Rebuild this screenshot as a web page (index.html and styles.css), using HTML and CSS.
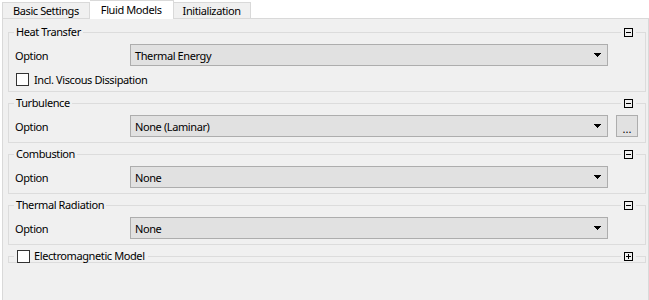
FILE: index.html
```html
<!DOCTYPE html>
<html lang="en">
<head>
    <meta charset="UTF-8">
    <meta name="viewport" content="width=device-width, initial-scale=1.0">
    <title>Fluid Models</title>
    <link rel="stylesheet" href="styles.css">
</head>
<body>
<div class="app">
    <nav class="tab-bar">
        <div class="tab">Basic Settings</div>
        <div class="tab active">Fluid Models</div>
        <div class="tab">Initialization</div>
        <div class="tab-fill"></div>
    </nav>

    <main class="panel">
        <!-- Heat Transfer -->
        <section class="group">
            <div class="group-head">
                <span class="rule start"></span>
                <span class="group-title">Heat Transfer</span>
                <span class="rule"></span>
                <svg class="toggle" width="9" height="9" viewBox="0 0 9 9"><rect x="0.5" y="0.5" width="8" height="8"/><path d="M2 4.5h5"/></svg>
                <span class="rule end"></span>
            </div>
            <div class="group-body">
                <div class="field-row">
                    <span class="field-label">Option</span>
                    <div class="combo">
                        <span>Thermal Energy</span>
                        <svg class="arrow" width="7" height="4" viewBox="0 0 7 4"><path d="M0 0h7v1H0zM1 1h5v1H1zM2 2h3v1H2zM3 3h1v1H3z"/></svg>
                    </div>
                    <span class="side-slot"></span>
                </div>
                <label class="check-row">
                    <span class="checkbox"></span>
                    <span>Incl. Viscous Dissipation</span>
                </label>
            </div>
        </section>

        <!-- Turbulence -->
        <section class="group">
            <div class="group-head">
                <span class="rule start"></span>
                <span class="group-title">Turbulence</span>
                <span class="rule"></span>
                <svg class="toggle" width="9" height="9" viewBox="0 0 9 9"><rect x="0.5" y="0.5" width="8" height="8"/><path d="M2 4.5h5"/></svg>
                <span class="rule end"></span>
            </div>
            <div class="group-body">
                <div class="field-row">
                    <span class="field-label">Option</span>
                    <div class="combo">
                        <span>None (Laminar)</span>
                        <svg class="arrow" width="7" height="4" viewBox="0 0 7 4"><path d="M0 0h7v1H0zM1 1h5v1H1zM2 2h3v1H2zM3 3h1v1H3z"/></svg>
                    </div>
                    <button class="side-slot more-button">...</button>
                </div>
            </div>
        </section>

        <!-- Combustion -->
        <section class="group">
            <div class="group-head">
                <span class="rule start"></span>
                <span class="group-title">Combustion</span>
                <span class="rule"></span>
                <svg class="toggle" width="9" height="9" viewBox="0 0 9 9"><rect x="0.5" y="0.5" width="8" height="8"/><path d="M2 4.5h5"/></svg>
                <span class="rule end"></span>
            </div>
            <div class="group-body">
                <div class="field-row">
                    <span class="field-label">Option</span>
                    <div class="combo">
                        <span>None</span>
                        <svg class="arrow" width="7" height="4" viewBox="0 0 7 4"><path d="M0 0h7v1H0zM1 1h5v1H1zM2 2h3v1H2zM3 3h1v1H3z"/></svg>
                    </div>
                    <span class="side-slot"></span>
                </div>
            </div>
        </section>

        <!-- Thermal Radiation -->
        <section class="group">
            <div class="group-head">
                <span class="rule start"></span>
                <span class="group-title">Thermal Radiation</span>
                <span class="rule"></span>
                <svg class="toggle" width="9" height="9" viewBox="0 0 9 9"><rect x="0.5" y="0.5" width="8" height="8"/><path d="M2 4.5h5"/></svg>
                <span class="rule end"></span>
            </div>
            <div class="group-body">
                <div class="field-row">
                    <span class="field-label">Option</span>
                    <div class="combo">
                        <span>None</span>
                        <svg class="arrow" width="7" height="4" viewBox="0 0 7 4"><path d="M0 0h7v1H0zM1 1h5v1H1zM2 2h3v1H2zM3 3h1v1H3z"/></svg>
                    </div>
                    <span class="side-slot"></span>
                </div>
            </div>
        </section>

        <!-- Electromagnetic Model (collapsed) -->
        <section class="group collapsed">
            <div class="group-head">
                <span class="rule start"></span>
                <label class="group-title group-check">
                    <span class="checkbox"></span>
                    <span>Electromagnetic Model</span>
                </label>
                <span class="rule"></span>
                <svg class="toggle" width="9" height="9" viewBox="0 0 9 9"><rect x="0.5" y="0.5" width="8" height="8"/><path d="M2 4.5h5M4.5 2v5"/></svg>
                <span class="rule end"></span>
            </div>
            <div class="group-body"></div>
        </section>
    </main>
</div>
</body>
</html>
```

FILE: styles.css
```css
* {
    margin: 0;
    padding: 0;
    box-sizing: border-box;
}

html, body {
    height: 100%;
}

body {
    background-color: #fff;
    font-family: "Noto Sans", "Open Sans", sans-serif;
    font-size: 11px;
    letter-spacing: -0.4px;
    color: #000;
    overflow: hidden;
}

.app {
    height: 100%;
    display: flex;
    flex-direction: column;
    padding-left: 2px;
}

/* Tabs */
.tab-bar {
    display: flex;
    align-items: flex-end;
    height: 19px;
}

.tab {
    height: 17px;
    line-height: 15px;
    padding: 0 10px;
    background-color: #f0f0f0;
    border: 1px solid #d9d9d9;
    border-left: none;
}

.tab:first-child {
    border-left: 1px solid #d9d9d9;
}

.tab:nth-child(3) {
    padding: 0 9px;
}

.tab.active {
    height: 19px;
    line-height: 17px;
    padding: 0 11px;
    background-color: #fff;
    border-bottom: none;
}

.tab-fill {
    flex: 1;
    height: 19px;
    border-bottom: 1px solid #d9d9d9;
}

/* Panel */
.panel {
    flex: 1;
    background-color: #f0f0f0;
    border-left: 1px solid #d9d9d9;
    border-right: 1px solid #d9d9d9;
    padding: 7px 2px 0 5px;
}

.group {
    margin-bottom: 5px;
}

.group-head {
    display: flex;
    align-items: center;
    height: 12px;
}

.rule {
    flex: 1;
    align-self: flex-end;
    height: 6px;
    border-top: 1px solid #dcdcdc;
}

.rule.start {
    flex: 0 0 6px;
    border-left: 1px solid #dcdcdc;
}

.rule.end {
    flex: 0 0 10px;
    border-right: 1px solid #dcdcdc;
}

.group-title {
    padding: 0 2px;
    line-height: 12px;
    white-space: nowrap;
}

.group-check {
    display: flex;
    align-items: center;
    gap: 4px;
    padding: 0 3px 0 3px;
}

.toggle {
    margin: 0 3px;
    fill: none;
    stroke: #000;
    stroke-width: 1;
    shape-rendering: crispEdges;
}

.group-body {
    border: 1px solid #dcdcdc;
    border-top: none;
    padding: 6px 7px 5px 6px;
}

.collapsed .group-body {
    padding: 0;
}

.field-row {
    display: flex;
    align-items: center;
    height: 22px;
}

.field-label {
    width: 115px;
}

.combo {
    flex: 1;
    height: 22px;
    display: flex;
    align-items: center;
    justify-content: space-between;
    padding: 0 6px 0 4px;
    background-color: #e1e1e1;
    border: 1px solid #adadad;
}

.arrow {
    fill: #000;
    shape-rendering: crispEdges;
}

.side-slot {
    width: 22px;
    height: 22px;
    margin-left: 8px;
}

.more-button {
    font-family: inherit;
    font-size: 11px;
    color: #000;
    background-color: #e1e1e1;
    border: 1px solid #adadad;
    line-height: 20px;
    padding-top: 3px;
}

.check-row {
    display: flex;
    align-items: center;
    gap: 5px;
    margin-top: 7px;
    margin-left: 1px;
    height: 13px;
}

.checkbox {
    width: 13px;
    height: 13px;
    background-color: #fff;
    border: 1px solid #333;
    flex-shrink: 0;
}
```
